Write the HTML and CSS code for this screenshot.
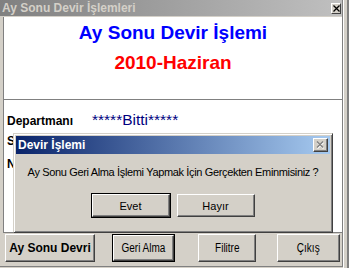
FILE: index.html
```html
<!DOCTYPE html>
<html lang="tr">
<head>
    <meta charset="UTF-8">
    <title>Ay Sonu Devir İşlemleri</title>
    <link rel="stylesheet" href="styles.css">
</head>
<body>
    <div class="screen">
        <div class="window">
            <div class="titlebar">
                <span class="titlebar-text">Ay Sonu Devir İşlemleri</span>
                <span class="close-btn">
                    <svg width="7" height="7" viewBox="0 0 7 7"><path d="M0.5 0.5 L6.5 6.5 M6.5 0.5 L0.5 6.5" stroke="#000" stroke-width="1.3"/></svg>
                </span>
            </div>
            <div class="body">
                <div class="panel">
                    <div class="header">
                        <div class="main-title">Ay Sonu Devir İşlemi</div>
                        <div class="period">2010-Haziran</div>
                    </div>
                    <div class="fields">
                        <div class="row">
                            <span class="label">Departmanı</span>
                            <span class="value">*****Bitti*****</span>
                        </div>
                        <div class="row">
                            <span class="label">S</span>
                        </div>
                        <div class="row">
                            <span class="label">N</span>
                        </div>
                    </div>
                </div>
                <!-- alt butonlar -->
                <div class="actions">
                    <button class="btn btn-bold btn-devir">Ay Sonu Devri</button>
                    <button class="btn btn-default btn-geri"><span class="narrow">Geri Alma</span></button>
                    <button class="btn btn-filitre"><span class="narrow">Filitre</span></button>
                    <button class="btn btn-cikis"><span class="narrow">Çıkış</span></button>
                </div>
            </div>
        </div>
        <div class="edge"></div>

        <!-- onay penceresi -->
        <div class="dialog">
            <div class="dialog-title">
                <span>Devir İşlemi</span>
                <span class="dialog-close">
                    <svg width="9" height="8" viewBox="0 0 9 8">
                        <path d="M1.5 1.5 L7.5 7.5 M7.5 1.5 L1.5 7.5" stroke="#fff" stroke-width="1.4"/>
                        <path d="M1 0.5 L7 6.5 M7 0.5 L1 6.5" stroke="#808080" stroke-width="1.4"/>
                    </svg>
                </span>
            </div>
            <div class="dialog-message">Ay Sonu Geri Alma İşlemi Yapmak İçin Gerçekten Eminmisiniz ?</div>
            <div class="dialog-buttons">
                <button class="btn btn-default dialog-btn">Evet</button>
                <button class="btn dialog-btn">Hayır</button>
            </div>
        </div>
    </div>
</body>
</html>
```

FILE: styles.css
```css
body {
    margin: 0;
    background-color: #d4d0c8;
    font-family: "Liberation Sans", Arial, sans-serif;
}

.screen {
    position: relative;
    width: 349px;
    height: 268px;
    display: flex;
    overflow: hidden;
    background-color: #d4d0c8;
}

.window {
    width: 342px;
    display: flex;
    flex-direction: column;
    border-right: 1px solid #808080;
    border-bottom: 1px solid #808080;
    height: 266px;
}

.titlebar {
    height: 16px;
    display: flex;
    align-items: center;
    justify-content: space-between;
    background: linear-gradient(to right, #808080, #c0c0c0);
    color: #d4d0c8;
    font-weight: bold;
    font-size: 12px;
    padding-left: 2px;
}

.close-btn {
    width: 10px;
    height: 11px;
    margin-right: 1px;
    display: flex;
    align-items: center;
    justify-content: center;
    background-color: #d4d0c8;
    border-top: 1px solid #fff;
    border-left: 1px solid #fff;
    border-right: 1px solid #404040;
    border-bottom: 1px solid #404040;
    box-sizing: border-box;
}

.body {
    flex: 1;
    display: flex;
    flex-direction: column;
    padding-top: 1px;
    padding-left: 3px;
}

.panel {
    height: 215px;
    background-color: #fff;
    border-left: 1px solid #808080;
    border-bottom: 1px solid #808080;
    display: flex;
    flex-direction: column;
}

.header {
    height: 83px;
    border-bottom: 1px solid #808080;
    text-align: center;
    font-weight: bold;
    box-sizing: border-box;
    padding-top: 5px;
}

.main-title {
    color: #0000ff;
    font-size: 19px;
    line-height: 22px;
}

.period {
    color: #ff0000;
    font-size: 19px;
    line-height: 22px;
    margin-top: 8px;
}

.fields {
    padding: 11px 0 0 3px;
    display: flex;
    flex-direction: column;
    gap: 9px;
}

.row {
    display: flex;
    align-items: baseline;
    height: 14px;
}

.label {
    width: 85px;
    font-weight: bold;
    font-size: 12px;
    color: #000;
}

.value {
    color: #000080;
    font-size: 15.5px;
}

.actions {
    display: flex;
    padding: 1px 0 0 2px;
}

.btn {
    font-family: "Liberation Sans", Arial, sans-serif;
    font-size: 11px;
    color: #000;
    background-color: #d4d0c8;
    border: 1px solid;
    border-color: #fff #404040 #404040 #fff;
    box-shadow: inset -1px -1px #808080;
    padding: 0;
    box-sizing: border-box;
}

.btn-default {
    box-shadow: inset -1px -1px #808080, 0 0 0 1px #000;
}

.actions .btn {
    height: 28px;
    font-size: 12.5px;
}

.actions .btn-bold {
    font-size: 12px;
    font-weight: bold;
}

.narrow {
    display: inline-block;
    transform: scaleX(0.8);
}

.btn-devir {
    width: 90px;
}

.btn-geri {
    width: 61px;
    margin-left: 18px;
    height: 26px !important;
    margin-top: 1px;
}

.btn-filitre {
    width: 58px;
    margin-left: 24px;
}

.btn-cikis {
    width: 63px;
    margin-left: 21px;
}

.edge {
    width: 6px;
    border-left: 1px solid #fff;
    border-right: 2px solid #808080;
    box-sizing: border-box;
}

.dialog {
    position: absolute;
    left: 13px;
    top: 133px;
    width: 320px;
    height: 100px;
    box-sizing: border-box;
    background-color: #d4d0c8;
    border: 1px solid;
    border-color: #d4d0c8 #404040 #404040 #d4d0c8;
    box-shadow: inset 1px 1px #fff, inset -1px -1px #808080;
    padding: 2px;
}

.dialog-title {
    height: 18px;
    display: flex;
    align-items: center;
    justify-content: space-between;
    background: linear-gradient(to right, #0a246a, #a6caf0);
    color: #fff;
    font-weight: bold;
    font-size: 12px;
    padding-left: 2px;
}

.dialog-close {
    width: 15px;
    height: 14px;
    margin-right: 2px;
    box-sizing: border-box;
    display: flex;
    align-items: center;
    justify-content: center;
    background-color: #d4d0c8;
    border: 1px solid;
    border-color: #fff #404040 #404040 #fff;
    box-shadow: inset -1px -1px #808080;
}

.dialog-message {
    margin-top: 12px;
    text-align: center;
    font-size: 11px;
    line-height: 13px;
    letter-spacing: -0.35px;
}

.dialog-buttons {
    display: flex;
    justify-content: center;
    gap: 7px;
    margin-top: 15px;
}

.dialog-btn {
    width: 78px;
    height: 23px;
}
```
